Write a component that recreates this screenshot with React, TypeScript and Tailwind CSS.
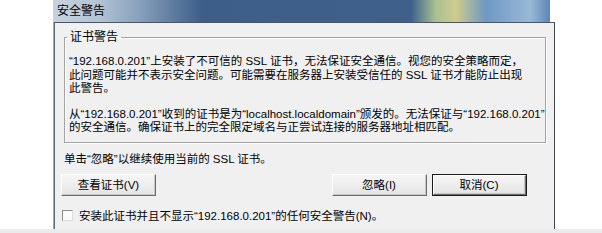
import type { ReactNode } from "react"

function Btn({ children, def = false, className = "" }: { children: ReactNode; def?: boolean; className?: string }) {
  return (
    <div className={`w-[95px] h-[22px] flex ${def ? "border border-[#1a1a1a]" : ""} ${className}`}>
      <div className="flex-1 flex items-center justify-center border border-t-white border-l-white border-r-[#6b6b6b] border-b-[#6b6b6b] bg-[#ececec] bg-[image:linear-gradient(#f6f6f6,#e4e4e4)] shadow-[inset_-1px_-1px_0_#c8c8c8]">
        <span className="leading-[14px]">{children}</span>
      </div>
    </div>
  )
}

export default function App() {
  return (
    <div className="w-[602px] h-[233px] bg-white flex flex-col overflow-hidden text-[11.5px] text-black font-['Liberation_Sans','Noto_Sans_CJK_SC',sans-serif]">
      <div className="flex-1 flex pl-[53px] min-h-0">
        {/* WINDOW */}
        <div className="w-[497px] flex flex-col">
          {/* TITLE BAR */}
          <div className="h-[22px] shrink-0 flex items-center pl-[4px] bg-[#3e608b] bg-[image:linear-gradient(90deg,#c6d2de_0%,#b4c4d4_9%,#8aa2bd_17%,#3c5e88_30%,#3e608b_72%,#a8c090_77%,#cfcc8e_81%,#6e98c4_87%,#9ab8d6_96%,#5d86b6_100%)]">
            <span className="text-[12px] leading-[14px]">安全警告</span>
          </div>

          <div className="flex-1 flex min-h-0">
            {/* LEFT FRAME */}
            <div className="w-[4px] bg-[#bed2e8] border-l border-[#9aa8b6]" />

            {/* CLIENT */}
            <div className="flex-1 flex flex-col bg-[#f0f0f0] border-t border-l border-r border-t-[#4c5560] border-l-[#5c6a7a] border-r-[#3c4450]">
              <fieldset className="mt-[7px] ml-[9px] mr-[8px] border border-[#a3a3a3] shadow-[inset_1px_1px_0_#ffffff,1px_1px_0_#ffffff] pl-[2px] pb-[7px]">
                <legend className="px-[3px] leading-[14px] text-[12px]">证书警告</legend>
                <div className="pl-[2px] mt-[11px] leading-[13.5px] whitespace-nowrap">
                  <div>“192.168.0.201”上安装了不可信的 SSL 证书，无法保证安全通信。视您的安全策略而定，</div>
                  <div>此问题可能并不表示安全问题。可能需要在服务器上安装受信任的 SSL 证书才能防止出现</div>
                  <div>此警告。</div>
                </div>
                <div className="pl-[2px] mt-[12px] leading-[13.5px] whitespace-nowrap">
                  <div>从“192.168.0.201”收到的证书是为“localhost.localdomain”颁发的。无法保证与“192.168.0.201”</div>
                  <div>的安全通信。确保证书上的完全限定域名与正尝试连接的服务器地址相匹配。</div>
                </div>
              </fieldset>

              <div className="ml-[9px] mt-[9px] leading-[14px] whitespace-nowrap">
                单击“忽略”以继续使用当前的 SSL 证书。
              </div>

              {/* BUTTONS */}
              <div className="flex items-center mt-[8px] ml-[6px] mr-[27px]">
                <Btn>查看证书(V)</Btn>
                <div className="flex-1" />
                <Btn>忽略(I)</Btn>
                <Btn def className="ml-[5px]">取消(C)</Btn>
              </div>

              {/* CHECKBOX */}
              <div className="flex items-center mt-[13px] ml-[7px] whitespace-nowrap">
                <div className="w-[11px] h-[11px] bg-[#fbfbfb] border border-t-[#8c8c8c] border-l-[#8c8c8c] border-r-[#dcdcdc] border-b-[#dcdcdc]" />
                <span className="ml-[6px] leading-[14px]">安装此证书并且不显示“192.168.0.201”的任何安全警告(N)。</span>
              </div>
            </div>

            {/* RIGHT FRAME */}
            <div className="w-[2px] bg-[#2f6cba]" />
          </div>
        </div>
      </div>
      <div className="h-[4px] bg-[#ebebeb]" />
    </div>
  )
}
